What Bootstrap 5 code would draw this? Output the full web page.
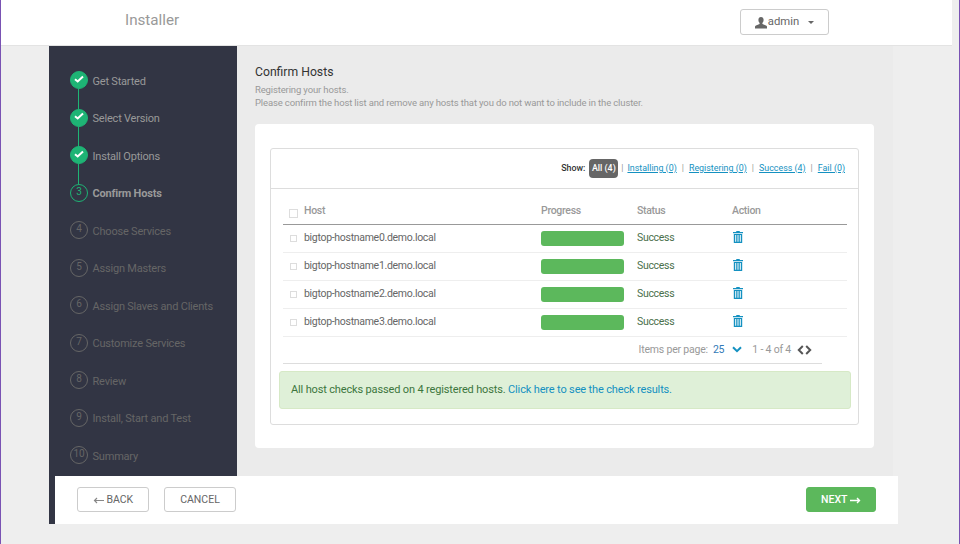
<!DOCTYPE html>
<html lang="en">
<head>
    <meta charset="UTF-8">
    <meta name="viewport" content="width=device-width, initial-scale=1.0">
    <title>Installer</title>
    <link href="https://cdn.jsdelivr.net/npm/bootstrap@5.3.0/dist/css/bootstrap.min.css" rel="stylesheet">
    <style>
        html, body { height: 100%; }
        body {
            font-family: Roboto, "Liberation Sans", sans-serif;
            background-color: #eeeeee;
            color: #666;
            border-left: 1px solid #7952b3;
            border-right: 1px solid #7952b3;
            overflow: hidden;
            font-size: 12px;
        }
        .top-bar {
            height: 46px;
            margin-right: 7px;
            background: #fff;
            border-bottom: 1px solid #e3e3e3;
            padding-left: 124px;
            padding-right: 123px;
        }
        .brand-name { font-size: 15.2px; color: #999; margin-top: -4px; }
        .user-btn {
            width: 89px; height: 26px; padding: 1px 0 0;
            margin-top: -1px;
            font-size: 11.3px; color: #666; background: #fff;
            border: 1px solid #ccc; border-radius: 3px;
            display: flex; align-items: center; justify-content: center; gap: 1px;
        }
        .user-btn::after { margin-left: 8px; color: #666; }
        .shell {
            margin-left: 48px;
            width: 844px;
            display: grid;
            grid-template-columns: 188px 656px;
            grid-template-rows: 430px 48px;
        }
        .side-nav {
            grid-row: 1 / 3;
            background: #323544;
            padding: 17px 0 0 21px;
            list-style: none;
            margin: 0;
        }
        .step {
            height: 37.5px;
            display: flex;
            align-items: center;
            gap: 4.5px;
            position: relative;
            color: #999;
            font-size: 11px;
            letter-spacing: -.2px;
            line-height: 18px;
        }
        .step-dot {
            width: 18px; height: 18px;
            border-radius: 50%;
            flex: none;
            display: flex;
            align-items: center;
            justify-content: center;
            font-size: 10px;
            line-height: 1;
            padding-bottom: 2px;
            margin-top: -3px;
            border: 1px solid #666;
            color: #666;
        }
        .step.is-done .step-dot { background: #1eb475; border-color: #1eb475; padding-bottom: 3px; }
        .step.is-done::after {
            content: "";
            position: absolute;
            left: 8px; top: 26px;
            width: 1px; height: 20px;
            background: #1eb475;
        }
        .step.is-current { font-weight: 700; }
        .step.is-current .step-dot { border-color: #1eb475; color: #1eb475; font-weight: 400; }
        .step.is-todo { color: #666; }
        .main-pane {
            background: #ebebeb;
            padding: 19px 19px 0 18px;
        }
        .page-title { font-size: 12.2px; font-weight: 400; color: #333; margin: 0 0 3px; line-height: 15px; }
        .page-desc { font-size: 9.5px; letter-spacing: -.14px; line-height: 13px; color: #999; margin: 0 0 15px; }
        .white-panel {
            background: #fff;
            border-radius: 4px;
            height: 324px;
            padding: 24px 15px 0;
        }
        .hosts-box { border: 1px solid #ddd; border-radius: 3px; height: 277px; }
        .filter-row {
            height: 40px;
            border-bottom: 1px solid #ddd;
            padding-right: 13px;
            font-size: 8.9px;
            gap: 3px;
        }
        .filter-row strong { color: #333; margin-right: 1px; font-weight: 500; }
        .filter-row a { color: #1491c1; }
        .filter-sep { color: #999; margin: 0 2px; }
        .filter-sep.first-sep { margin: 0 1px 0 0; }
        .pill-on { background: #666; color: #fff; border-radius: 4px; padding: 0 2.5px; height: 19px; line-height: 19px; font-weight: 500; }
        .hosts-body { padding: 14px 12px 0; }
        .hosts-table { table-layout: fixed; width: 564px; margin: 0; font-size: 10.5px; letter-spacing: -.3px; }
        .hosts-table th {
            height: 21px; padding: 0 0 6px;
            font-weight: 500; color: #999;
            border-bottom: 1px solid #999;
            line-height: 14px;
        }
        .hosts-table td {
            height: 28px; padding: 0;
            color: #666;
            vertical-align: middle;
            border-bottom: 1px solid #eee;
        }
        .check-box { display: block; width: 7px; height: 7px; border: 1px solid #ddd; margin-left: 7px; }
        th .check-box { width: 9px; height: 9px; margin: -2px 0 0 6px; }
        .bar-fill { width: 83px; height: 15px; background: #5cb85c; border-radius: 3px; }
        .hosts-table td.status-ok { color: #4a6f4b; }
        .trash-icon { display: block; margin: -3px 0 0 1px; }
        .pager-row {
            width: 539px; height: 27px;
            border-bottom: 1px solid #ddd;
            padding-right: 10px;
            font-size: 10.5px;
            letter-spacing: -.2px;
            color: #999;
        }
        .per-page { color: #337ab7; margin: 0 8px 0 5px; }
        .pager-row svg { display: block; }
        .pager-next { margin-left: 1px; }
        .range-text { margin: 0 6px 0 10px; }
        .check-alert {
            height: 38px;
            width: 572px;
            margin: 7px 0 0 -4px;
            padding: 2px 11px 0;
            font-size: 11px;
            letter-spacing: -.15px;
            background: #dff0d8;
            border: 1px solid #d6e9c6;
            border-radius: 3px;
            color: #3c763d;
        }
        .check-alert a { color: #1491c1; text-decoration: none; }
        .foot-bar {
            margin: 0 -5px 0 -182px;
            position: relative;
            height: 48px;
            background: #fff;
            padding: 0 22px;
        }
        .foot-btn {
            height: 25px; width: 72px; padding: 1px 0 0;
            margin-top: -1px;
            font-size: 10.5px; color: #666;
            background: #fff;
            border: 1px solid #ccc; border-radius: 3px;
        }
        .foot-next { width: 70px; font-weight: 500; background: #5cb85c; border-color: #5cb85c; color: #fff; }
        .cancel-btn { margin-left: 15px; }
    </style>
</head>
<body>
    <header class="top-bar d-flex align-items-center justify-content-between">
        <div class="brand-name">Installer</div>
        <button class="user-btn dropdown-toggle" type="button">
            <svg width="12" height="12" viewBox="0 0 12 12" fill="#666"><path d="M6 0C4.4 0 3.4 1.2 3.4 3c0 1.2.5 2.3 1.2 2.9v1L1 8.4c-.6.3-1 .8-1 1.4V11.5h12V9.8c0-.6-.4-1.100-1-1.400L7.400 6.900v-1C8.100 5.300 8.600 4.200 8.600 3 8.600 1.200 7.600 0 6 0z"/></svg>
            admin
        </button>
    </header>

    <div class="shell">
        <ul class="side-nav">
            <li class="step is-done"><span class="step-dot"><svg width="10" height="8" viewBox="0 0 10 8"><path d="M1 4.200 3.700 6.500 9 1.500" fill="none" stroke="#fff" stroke-width="2"/></svg></span>Get Started</li>
            <li class="step is-done"><span class="step-dot"><svg width="10" height="8" viewBox="0 0 10 8"><path d="M1 4.200 3.700 6.500 9 1.500" fill="none" stroke="#fff" stroke-width="2"/></svg></span>Select Version</li>
            <li class="step is-done"><span class="step-dot"><svg width="10" height="8" viewBox="0 0 10 8"><path d="M1 4.200 3.700 6.500 9 1.500" fill="none" stroke="#fff" stroke-width="2"/></svg></span>Install Options</li>
            <li class="step is-current"><span class="step-dot">3</span>Confirm Hosts</li>
            <li class="step is-todo"><span class="step-dot">4</span>Choose Services</li>
            <li class="step is-todo"><span class="step-dot">5</span>Assign Masters</li>
            <li class="step is-todo"><span class="step-dot">6</span>Assign Slaves and Clients</li>
            <li class="step is-todo"><span class="step-dot">7</span>Customize Services</li>
            <li class="step is-todo"><span class="step-dot">8</span>Review</li>
            <li class="step is-todo"><span class="step-dot">9</span>Install, Start and Test</li>
            <li class="step is-todo"><span class="step-dot">10</span>Summary</li>
        </ul>

        <main class="main-pane">
            <h1 class="page-title">Confirm Hosts</h1>
            <p class="page-desc">Registering your hosts.<br>Please confirm the host list and remove any hosts that you do not want to include in the cluster.</p>
            <div class="white-panel">
                <div class="hosts-box">
                    <div class="filter-row d-flex align-items-center justify-content-end">
                        <strong>Show:</strong>
                        <span class="pill-on">All (4)</span>
                        <span class="filter-sep first-sep">|</span><a href="#">Installing (0)</a>
                        <span class="filter-sep">|</span><a href="#">Registering (0)</a>
                        <span class="filter-sep">|</span><a href="#">Success (4)</a>
                        <span class="filter-sep">|</span><a href="#">Fail (0)</a>
                    </div>
                    <div class="hosts-body">
                        <table class="table hosts-table">
                            <colgroup>
                                <col style="width:21px"><col style="width:237px"><col style="width:96px"><col style="width:95px"><col>
                            </colgroup>
                            <thead>
                                <tr><th><span class="check-box"></span></th><th>Host</th><th>Progress</th><th>Status</th><th>Action</th></tr>
                            </thead>
                            <tbody id="host-rows"></tbody>
                        </table>
                        <div class="pager-row d-flex align-items-center justify-content-end">
                            <span>Items per page:</span>
                            <span class="per-page">25</span>
                            <svg width="10" height="7" viewBox="0 0 10 7"><path d="M1 1.200 5 5.200 9 1.200" fill="none" stroke="#1491c1" stroke-width="2"/></svg>
                            <span class="range-text">1 - 4 of 4</span>
                            <svg width="7" height="10" viewBox="0 0 7 10"><path d="M5.800 1 1.800 5 5.800 9" fill="none" stroke="#555" stroke-width="2"/></svg>
                            <svg class="pager-next" width="7" height="10" viewBox="0 0 7 10"><path d="M1.200 1 5.200 5 1.200 9" fill="none" stroke="#555" stroke-width="2"/></svg>
                        </div>
                        <div class="alert alert-success check-alert d-flex align-items-center">
                            <span>All host checks passed on 4 registered hosts. <a href="#">Click here to see the check results.</a></span>
                        </div>
                    </div>
                </div>
            </div>
        </main>

        <footer class="foot-bar d-flex align-items-center">
            <button class="foot-btn" type="button">
                <svg width="11" height="7" viewBox="0 0 11 7"><path d="M11 3.500H2M4 1 1.500 3.500 4 6" fill="none" stroke="#888" stroke-width="1.200"/></svg>
                BACK
            </button>
            <button class="foot-btn cancel-btn" type="button">CANCEL</button>
            <button class="foot-btn foot-next ms-auto" type="button">
                NEXT
                <svg width="11" height="7" viewBox="0 0 11 7"><path d="M0 3.500H9M7 1 9.500 3.500 7 6" fill="none" stroke="#fff" stroke-width="1.400"/></svg>
            </button>
        </footer>
    </div>

    <script src="https://cdn.jsdelivr.net/npm/bootstrap@5.3.0/dist/js/bootstrap.bundle.min.js"></script>
    <script>
        const hosts = ['bigtop-hostname0.demo.local', 'bigtop-hostname1.demo.local', 'bigtop-hostname2.demo.local', 'bigtop-hostname3.demo.local'];
        const trash = '<svg class="trash-icon" width="10" height="12" viewBox="0 0 10 12" fill="#1491c1"><path d="M3.500 0h3l.5 1h3v1.200H0V1h3zM.8 3h8.400v9H.8zM2.200 4v6.800h1V4zm2.300 0v6.800h1V4zm2.300 0v6.800h1V4z" fill-rule="evenodd"/></svg>';
        document.getElementById('host-rows').innerHTML = hosts.map(h => `
            <tr>
                <td><span class="check-box"></span></td>
                <td>${h}</td>
                <td><div class="bar-fill"></div></td>
                <td class="status-ok">Success</td>
                <td>${trash}</td>
            </tr>`).join('');
    </script>
</body>
</html>
